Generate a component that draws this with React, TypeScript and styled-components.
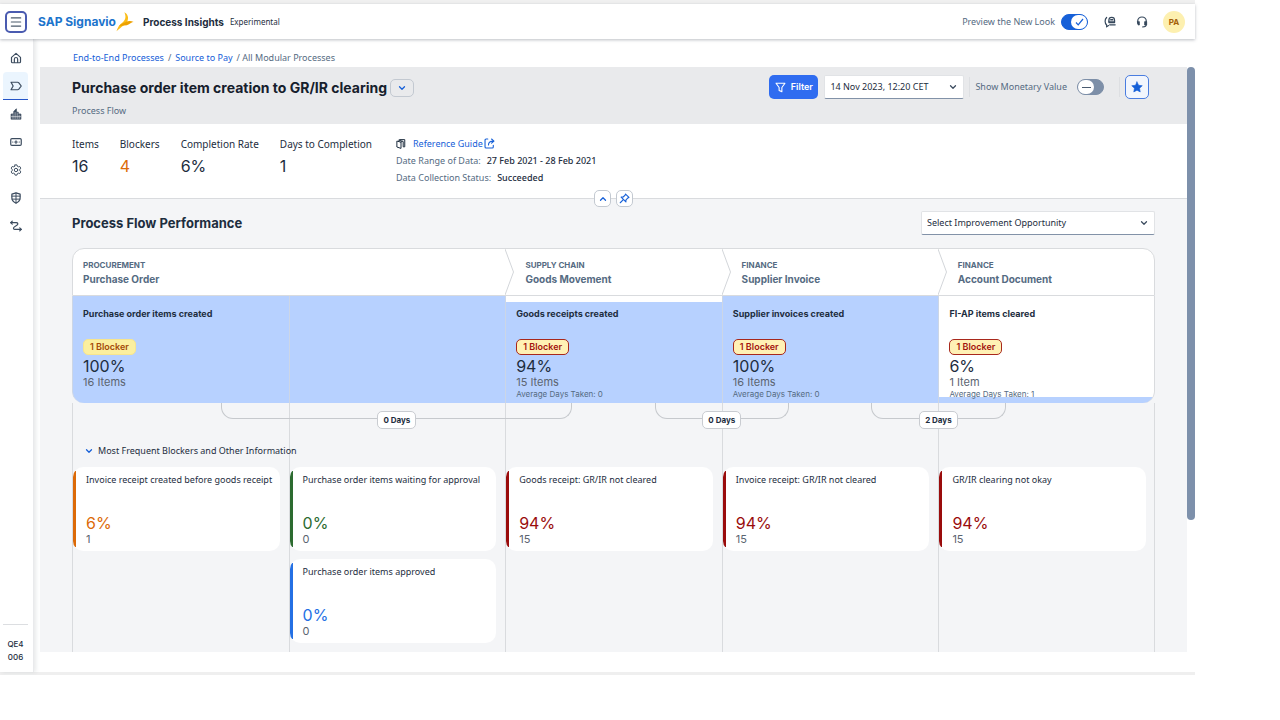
import React from 'react';
import styled, { createGlobalStyle, css } from 'styled-components';
import { ChevronDown, ChevronUp, Menu } from 'lucide-react';

const color = {
  ink: '#1d2d3e',
  muted: '#556b82',
  grey: '#5b6470',
  blue: '#1660d8',
  accent: '#2f6cf0',
  fill: '#b7d1ff',
  line: '#d9dbde',
  surface: '#f4f5f7',
  orange: '#dc6a08',
  green: '#2c6b30',
  red: '#9a0c0c',
};

const GlobalStyle = createGlobalStyle`
  *, *::before, *::after { box-sizing: border-box; }
  body {
    margin: 0;
    background: #fff;
    color: ${color.ink};
    font: 400 9px/12px "Noto Sans", sans-serif;
  }
  button, select, input { font: inherit; color: inherit; margin: 0; }
  button { padding: 0; cursor: pointer; }
  a { color: ${color.blue}; text-decoration: none; }
  h1, h2, h3, p, dl, dd, ul, ol { margin: 0; padding: 0; list-style: none; }
  svg { display: block; flex: none; }
`;

const bold = css`
  font-family: Inter, sans-serif;
  font-weight: 700;
`;

const Page = styled.div`
  padding-right: 85px;
`;

const Frame = styled.div`
  border-top: 4px solid #f0f0f0;
  border-bottom: 3px solid #efefef;
`;

/* ---------- shell bar ---------- */

const ShellBar = styled.header`
  position: relative;
  display: flex;
  align-items: center;
  height: 35px;
  padding: 0 10px 0 5px;
  background: #fff;
  box-shadow: 0 1px 3px rgba(60, 70, 85, 0.35);
  z-index: 2;
`;

const MenuButton = styled.button`
  display: grid;
  place-items: center;
  width: 22px;
  height: 22px;
  border: 2px solid #4a5bb0;
  border-radius: 5px;
  background: #fff;
  color: #4b5a6b;
`;

const Brand = styled.a`
  ${bold}
  display: flex;
  align-items: center;
  margin-left: 11px;
  font-size: 12px;
  color: #1c74cc;
`;

const Product = styled.span`
  ${bold}
  margin-left: 9px;
  font-size: 10px;
`;

const Tag = styled.span`
  margin-left: 6px;
  font-size: 8px;
`;

const ShellActions = styled.div`
  display: flex;
  align-items: center;
  margin-left: auto;
`;

const ToggleLabel = styled.label<{ $gap: number }>`
  display: flex;
  align-items: center;
  gap: ${(p) => p.$gap}px;
  color: ${color.muted};
`;

const Toggle = styled.input.attrs({ type: 'checkbox', role: 'switch' })`
  appearance: none;
  display: flex;
  width: 27px;
  height: 16px;
  border: 1px solid #7d8fa8;
  border-radius: 8px;
  background: #7d8fa8;
  cursor: pointer;

  &::before {
    content: '';
    width: 16px;
    height: 14px;
    border-radius: 8px;
    background: #fff linear-gradient(#4a5b70, #4a5b70) center / 9px 1px no-repeat;
  }

  &:checked {
    justify-content: flex-end;
    border-color: ${color.blue};
    background: ${color.blue};
  }

  &:checked::before {
    background: #fff;
  }
`;

const ToggleBox = styled.span`
  display: grid;

  > * {
    grid-area: 1 / 1;
  }

  > svg {
    justify-self: end;
    align-self: center;
    margin-right: 4px;
    pointer-events: none;
  }
`;

const IconButton = styled.button`
  display: grid;
  place-items: center;
  width: 20px;
  height: 20px;
  margin-left: 12px;
  border: 0;
  background: none;
  color: #36485c;
`;

const Avatar = styled.button`
  ${bold}
  width: 22px;
  height: 22px;
  margin-left: 11px;
  border: 0;
  border-radius: 50%;
  background: #fdf0b0;
  color: #a3600a;
  font-size: 8px;
`;

/* ---------- side navigation ---------- */

const Body = styled.div`
  display: grid;
  grid-template-columns: 34px minmax(0, 1fr) 8px;
`;

const SideNav = styled.nav`
  display: flex;
  flex-direction: column;
  justify-content: space-between;
  padding: 5px 5px 8px 3px;
  border-right: 1px solid #e9eaec;
  box-shadow: 2px 0 4px rgba(60, 70, 85, 0.12);
`;

const NavLink = styled.a<{ $active?: boolean }>`
  display: grid;
  place-items: center;
  height: 28px;
  border-radius: 4px 4px 0 0;
  color: #3c4c5f;
  ${(p) =>
    p.$active &&
    css`
      background: #ebf5fe linear-gradient(#2455c8, #2455c8) bottom / 100% 1px no-repeat;
    `}
`;

const Tenant = styled.p`
  padding-top: 13px;
  border-top: 1px solid #dcdee1;
  color: ${color.ink};
  font: 500 8px/13px Inter, sans-serif;
  text-align: center;
`;

/* ---------- page header ---------- */

const Main = styled.main`
  margin-left: 6px;
  padding-bottom: 20px;
`;

const Breadcrumb = styled.nav`
  display: flex;
  gap: 4px;
  padding: 13px 33px 3px;
  color: ${color.muted};
`;

const TitleBar = styled.div`
  display: flex;
  justify-content: space-between;
  align-items: flex-start;
  padding: 8px 38px 7px 32px;
  background: #e9eaec;
`;

const TitleRow = styled.div`
  display: flex;
  align-items: center;
  gap: 3px;
  height: 26px;
`;

const Title = styled.h1`
  ${bold}
  font-size: 14px;
  line-height: 18px;
  color: #16202c;
`;

const VariantButton = styled.button`
  display: grid;
  place-items: center;
  width: 24px;
  height: 18px;
  border: 1px solid #c3c9d1;
  border-radius: 5px;
  background: none;
  color: ${color.blue};
`;

const Subtitle = styled.p`
  margin-top: 4px;
  color: ${color.muted};
`;

const Toolbar = styled.div`
  display: flex;
  align-items: center;
  height: 24px;
`;

const FilterButton = styled.button`
  display: flex;
  align-items: center;
  justify-content: center;
  gap: 5px;
  width: 49px;
  height: 24px;
  margin-right: 6px;
  border: 0;
  border-radius: 5px;
  background: ${color.accent};
  color: #fff;
  font-family: Inter, sans-serif;
  font-weight: 600;
`;

const SelectBox = styled.div<{ $width: number }>`
  display: grid;
  width: ${(p) => p.$width}px;

  > * {
    grid-area: 1 / 1;
  }

  > svg {
    justify-self: end;
    align-self: center;
    margin-right: 6px;
    pointer-events: none;
    color: #3c4c5f;
  }
`;

const Select = styled.select`
  appearance: none;
  width: 100%;
  height: 24px;
  padding: 0 20px 0 5px;
  border: 1px solid #e1e3e6;
  border-bottom-color: #8292a8;
  border-radius: 2px;
  background: #fff;
  color: ${color.ink};
`;

const Divider = styled.span<{ $before?: number }>`
  width: 1px;
  height: 20px;
  margin: 0 5px 0 ${(p) => p.$before ?? 5}px;
  background: #dddfe2;
`;

const StarButton = styled.button`
  display: grid;
  place-items: center;
  width: 24px;
  height: 24px;
  border: 1px solid #4a7de0;
  border-radius: 5px;
  background: #f2f6fd;
  color: ${color.blue};
`;

const Summary = styled.section`
  position: relative;
  display: flex;
  align-items: flex-start;
  gap: 24px;
  height: 75px;
  padding: 13px 32px 0;
  border-bottom: 1px solid ${color.line};
`;

const Stats = styled.dl`
  display: flex;
  gap: 21px;
`;

const StatLabel = styled.dt`
  font-size: 10px;
  line-height: 14px;
`;

const StatValue = styled.dd<{ $color?: string }>`
  margin-top: 4px;
  font-family: Inter, sans-serif;
  font-size: 16px;
  line-height: 22px;
  color: ${(p) => p.$color ?? color.ink};
`;

const Details = styled.div`
  margin-top: -2px;
  line-height: 17px;
`;

const Guide = styled.p`
  display: flex;
  align-items: center;
  gap: 7px;
`;

const GuideLink = styled.a`
  display: flex;
  align-items: center;
  gap: 1px;
`;

const Fact = styled.p`
  display: flex;
  gap: 6px;
  color: ${color.muted};

  b {
    font-weight: 500;
    color: ${color.ink};
  }
`;

const HeaderHandles = styled.div`
  position: absolute;
  left: 0;
  right: 0;
  bottom: -9px;
  display: flex;
  justify-content: center;
  gap: 5px;
`;

const Handle = styled.button`
  display: grid;
  place-items: center;
  width: 17px;
  height: 17px;
  border: 1px solid #c3c9d1;
  border-radius: 5px;
  background: #fff;
  color: ${color.blue};
`;

/* ---------- process flow ---------- */

const Performance = styled.section`
  padding: 12px 32px 0;
  background: ${color.surface};
`;

const SectionHead = styled.div`
  display: flex;
  justify-content: space-between;
  align-items: center;
  margin-bottom: 13px;
`;

const SectionTitle = styled.h2`
  ${bold}
  font-size: 13px;
  line-height: 18px;
`;

const columns = css`
  display: grid;
  grid-template-columns: repeat(5, minmax(0, 1fr));
`;

const Phases = styled.div`
  ${columns}
  border: 1px solid ${color.line};
  border-radius: 12px 12px 0 0;
  background: #fff;
`;

const Phase = styled.div<{ $first?: boolean }>`
  display: flex;
  grid-column: span ${(p) => (p.$first ? 2 : 1)};
  height: 46px;
  padding-left: ${(p) => (p.$first ? 10 : 0)}px;
`;

const PhaseText = styled.div`
  padding: 9px 0 0;
`;

const PhaseArea = styled.p`
  font: 700 8px/14px Inter, sans-serif;
  color: ${color.muted};
`;

const PhaseName = styled.h3`
  font: 700 10px/15px Inter, sans-serif;
  color: ${color.muted};
`;

const Steps = styled.div`
  ${columns}
`;

const Step = styled.div<{ $share: number }>`
  height: 107px;
  padding: 12px 0 0 10px;
  border-left: 1px solid #ccd6e6;
  background: linear-gradient(to top, ${color.fill} ${(p) => p.$share}%, #fff ${(p) => p.$share}%);

  &:first-child {
    border-radius: 0 0 0 12px;
  }

  &:last-child {
    border-right: 1px solid ${color.line};
    border-radius: 0 0 12px 0;
  }
`;

const StepName = styled.h3`
  ${bold}
  font-size: 9px;
  line-height: 12px;
`;

const Badge = styled.span<{ $critical: boolean }>`
  display: inline-block;
  margin: 19px 0 2px;
  padding: 0 6px;
  border: 1px solid ${(p) => (p.$critical ? '#a8281c' : '#f7e58e')};
  border-radius: 5px;
  background: ${(p) => (p.$critical ? '#fff1b5' : '#fbef9f')};
  color: ${(p) => (p.$critical ? '#a3140f' : '#a44a08')};
  font: 600 9px/14px Inter, sans-serif;
  vertical-align: top;
`;

const Percent = styled.p<{ $color?: string }>`
  font-family: Inter, sans-serif;
  font-size: 16px;
  line-height: 18px;
  color: ${(p) => p.$color ?? color.ink};
`;

const Count = styled.p`
  font-family: Inter, sans-serif;
  font-size: 11px;
  line-height: 14px;
  color: ${color.grey};
`;

const Average = styled.p`
  font-family: Inter, sans-serif;
  font-size: 8px;
  line-height: 11px;
  color: ${color.muted};
`;

const Lower = styled.div`
  display: grid;

  > * {
    grid-area: 1 / 1;
  }
`;

const Lanes = styled.div`
  ${columns}
`;

const Lane = styled.div`
  border-left: 1px solid ${color.line};

  &:last-child {
    border-right: 1px solid ${color.line};
  }
`;

const Connectors = styled.div`
  ${columns}
`;

const Connector = styled.div<{ $from: number; $to: number; $width: number }>`
  display: flex;
  justify-content: center;
  align-items: flex-end;
  grid-column: ${(p) => p.$from} / ${(p) => p.$to};
  grid-row: 1;
  justify-self: center;
  width: ${(p) => p.$width}%;
  height: 16px;
  border: 1px solid #c6c9cd;
  border-top: 0;
  border-radius: 0 0 12px 12px;
`;

const Days = styled.span`
  margin-bottom: -11px;
  padding: 0 5px;
  border: 1px solid #c9ccd1;
  border-radius: 5px;
  background: #fff;
  font: 700 8px/16px Inter, sans-serif;
`;

const Collapse = styled.button`
  display: flex;
  align-items: center;
  gap: 4px;
  margin: 26px 0 10px 12px;
  border: 0;
  background: none;

  svg {
    color: ${color.blue};
  }
`;

const Cards = styled.div`
  ${columns}
  align-items: start;
  padding-bottom: 9px;
`;

const CardStack = styled.ul`
  display: grid;
  gap: 8px;
  padding-right: 9px;
  padding-left: 1px;
`;

const Card = styled.li<{ $color: string }>`
  height: 84px;
  padding: 7px 4px 0 13px;
  border-radius: 10px;
  background: #fff linear-gradient(${(p) => p.$color}, ${(p) => p.$color}) left center / 3px 76px no-repeat;
  white-space: nowrap;
`;

const CardFigures = styled.div`
  margin-top: 28px;
`;

const ScrollTrack = styled.div`
  padding-top: 28px;
`;

const ScrollThumb = styled.div`
  width: 8px;
  height: 453px;
  border-radius: 4px;
  background: #7d90ab;
`;

/* ---------- icons ---------- */

type IconProps = { children: React.ReactNode; size?: number };

const Glyph = ({ children, size = 12 }: IconProps) => (
  <svg
    width={size}
    height={size}
    viewBox="0 0 16 16"
    fill="none"
    stroke="currentColor"
    strokeWidth="1.6"
    strokeLinecap="round"
    strokeLinejoin="round"
    aria-hidden="true"
  >
    {children}
  </svg>
);

const HomeIcon = () => (
  <Glyph>
    <path d="M2 7.2 8 1.8l6 5.4V13a1.3 1.3 0 0 1-1.3 1.3H3.3A1.3 1.3 0 0 1 2 13Z" />
    <path d="M5.8 14V9.5a2.2 2.2 0 0 1 4.4 0V14" />
  </Glyph>
);

const ProcessIcon = () => (
  <Glyph>
    <path d="M1.4 3h8.8c.7 0 1.2.3 1.6.8L15 8l-3.2 4.2c-.4.5-.9.8-1.6.8H1.4L4.2 8Z" />
  </Glyph>
);

const BuildingIcon = () => (
  <Glyph>
    <path d="M1.500 14.500V8H5V4.500L8.500 1v4.500H11V8h3.500v6.500Z" fill="currentColor" strokeWidth="1" />
    <path d="M4 9v5M6.800 6v8M9.600 7v7M12.200 9.500V14M2 11.500h12" stroke="#fff" strokeWidth=".7" />
  </Glyph>
);

const MoneyIcon = () => (
  <Glyph>
    <rect x="1" y="3.5" width="14" height="9" rx="1.5" />
    <path d="M6.300 8h3.400M8 6.300v3.400M3.600 8h.2M12.200 8h.2" />
  </Glyph>
);

const GearIcon = () => (
  <Glyph>
    <path
      d="M6.700 1.200h2.600l.5 1.900 1.300.7 1.900-.5 1.400 2.200-1.300 1.500v2l1.300 1.500-1.400 2.200-1.900-.5-1.300.7-.5 1.900H6.700l-.5-1.900-1.300-.7-1.900.5-1.400-2.200L2.900 9V7L1.600 5.500 3 3.300l1.900.5 1.300-.7Z"
      strokeWidth="1.3"
    />
    <circle cx="8" cy="8" r="2.3" strokeWidth="1.3" />
  </Glyph>
);

const ShieldIcon = () => (
  <Glyph>
    <path d="M8 1.200 13.500 2.800V8c0 3.200-2.200 5.400-5.500 6.800C4.700 13.400 2.500 11.200 2.500 8V2.800Z" />
    <path d="M8 1.500v13M2.600 5.500h10.800M3 9.500h10" strokeWidth="1.3" />
  </Glyph>
);

const RouteIcon = () => (
  <Glyph>
    <path d="M1 3.500h7.500c2 0 2.600 2 1 3.200L5.500 9.500c-1.600 1.200-.9 3 1 3H15" />
    <path d="M3 1.500 1 3.500l2 2M13 10.500l2 2-2 2" />
  </Glyph>
);

const ChatIcon = () => (
  <Glyph>
    <path d="M3.500 2C.8 4.500.8 9.500 3.500 12v2.500L6 12.800" />
    <path d="M6.500 5.500a3.800 3.800 0 0 1 7.600 0v3.300H6.500Z" />
    <path d="M8.800 4.800h3M6.500 7h7.600M7.500 11.800H15" strokeWidth="1.4" />
  </Glyph>
);

const HeadsetIcon = () => (
  <Glyph>
    <path d="M2.300 9.500V7a5.700 5.700 0 0 1 11.400 0v4c0 2.200-1.500 3.500-4.700 3.500" />
    <path d="M2.300 7.500h2.200V12h-.7c-1 0-1.500-.5-1.500-1.500ZM13.700 7.500h-2.200V12h2.200Z" fill="currentColor" strokeWidth="1" />
  </Glyph>
);

const FunnelIcon = () => (
  <Glyph size={11}>
    <path d="M1.500 1.800h13L10 8v6l-4-1.800V8Z" />
  </Glyph>
);

const StarIcon = () => (
  <Glyph>
    <path
      d="m8 1.200 2.100 4.500 4.900.6-3.600 3.400.9 4.900L8 12.200l-4.300 2.400.9-4.900L1 6.300l4.900-.6Z"
      fill="currentColor"
      strokeWidth=".8"
    />
  </Glyph>
);

const GuideIcon = () => (
  <Glyph size={10}>
    <path d="M2 3.500 8 5v10l-6-2ZM8 5l1.500-1M4.500 1.800 5.500 1H14v11.500h-2.500V4L5 2" />
  </Glyph>
);

const ExternalIcon = () => (
  <Glyph size={11}>
    <path d="M5.500 1.500H3A1.500 1.500 0 0 0 1.500 3v10A1.500 1.500 0 0 0 3 14.500h9a1.500 1.500 0 0 0 1.500-1.500v-2.500" />
    <path d="M6.500 10c0-3.500 2-5.500 7-5.500M11 1.500l3.500 3-3.500 3" />
  </Glyph>
);

const PinIcon = () => (
  <Glyph size={11}>
    <path d="m9.500 1.500 5 5-1.500.6-2.800 2.800-.2 3L3.100 6l3-.2L8.900 3ZM6.300 9.700l-4.500 4.500" />
  </Glyph>
);

const CheckIcon = () => (
  <svg width="9" height="8" viewBox="0 0 9 8" fill="none" stroke="#1660d8" strokeWidth="1.2" aria-hidden="true">
    <path d="m1 4.500 2.200 2.300L8 1" />
  </svg>
);

const Logo = () => (
  <svg width="18" height="20" viewBox="1 0 18 20" aria-hidden="true">
    <path d="M9.300.3c3.400 1.700 4.600 5.200 3.200 8.600C11.200 12.200 7 13.900 1.500 19.200c1-3.800 2.900-6.500 6-8.800C10.700 8 11.300 4.600 9.300.3Z" fill="#fbbd17" />
    <path d="M4 13.800c2.300-2.300 4.600-2.600 7-3.900 2-1.100 5-1.200 7.700 0-2.400.3-3.200 1.300-4.700 2.300-2.700 1.700-6.600 1.300-10 1.600Z" fill="#eda100" />
  </svg>
);

const PhaseArrow = () => (
  <svg width="20" height="46" viewBox="0 0 20 46" fill="none" stroke="#d3d6da" aria-hidden="true">
    <path d="M0 0 8.500 23 0 46" />
  </svg>
);

/* ---------- data ---------- */

const navItems = [
  { label: 'Home', icon: HomeIcon },
  { label: 'Processes', icon: ProcessIcon, active: true },
  { label: 'Organization', icon: BuildingIcon },
  { label: 'Value', icon: MoneyIcon },
  { label: 'Settings', icon: GearIcon },
  { label: 'Security', icon: ShieldIcon },
  { label: 'Flows', icon: RouteIcon },
];

const stats = [
  { label: 'Items', value: '16' },
  { label: 'Blockers', value: '4', color: color.orange },
  { label: 'Completion Rate', value: '6%' },
  { label: 'Days to Completion', value: '1' },
];

const phases = [
  { area: 'PROCUREMENT', name: 'Purchase Order' },
  { area: 'SUPPLY CHAIN', name: 'Goods Movement' },
  { area: 'FINANCE', name: 'Supplier Invoice' },
  { area: 'FINANCE', name: 'Account Document' },
];

type StepData = { name: string; share: number; items: string; average?: string; critical: boolean } | null;

const steps: StepData[] = [
  { name: 'Purchase order items created', share: 100, items: '16 Items', critical: false },
  null,
  { name: 'Goods receipts created', share: 94, items: '15 Items', average: '0', critical: true },
  { name: 'Supplier invoices created', share: 100, items: '16 Items', average: '0', critical: true },
  { name: 'FI-AP items cleared', share: 6, items: '1 Item', average: '1', critical: true },
];

const connectors = [
  { from: 1, to: 4, width: 54, text: '0 Days' },
  { from: 3, to: 5, width: 31, text: '0 Days' },
  { from: 4, to: 6, width: 31, text: '2 Days' },
];

const cardColumns = [
  [{ title: 'Invoice receipt created before goods receipt', share: '6%', count: '1', color: color.orange }],
  [
    { title: 'Purchase order items waiting for approval', share: '0%', count: '0', color: color.green },
    { title: 'Purchase order items approved', share: '0%', count: '0', color: '#2470e4' },
  ],
  [{ title: 'Goods receipt: GR/IR not cleared', share: '94%', count: '15', color: color.red }],
  [{ title: 'Invoice receipt: GR/IR not cleared', share: '94%', count: '15', color: color.red }],
  [{ title: 'GR/IR clearing not okay', share: '94%', count: '15', color: color.red }],
];

/* ---------- page ---------- */

export default function App() {
  return (
    <Page>
      <GlobalStyle />
      <Frame>
        <ShellBar>
          <MenuButton aria-label="Menu">
            <Menu size={14} strokeWidth={2} />
          </MenuButton>
          <Brand href="#">
            SAP Signavio
            <Logo />
          </Brand>
          <Product>Process Insights</Product>
          <Tag>Experimental</Tag>
          <ShellActions>
            <ToggleLabel $gap={6}>
              Preview the New Look
              <ToggleBox>
                <Toggle defaultChecked />
                <CheckIcon />
              </ToggleBox>
            </ToggleLabel>
            <IconButton aria-label="Feedback">
              <ChatIcon />
            </IconButton>
            <IconButton aria-label="Support">
              <HeadsetIcon />
            </IconButton>
            <Avatar>PA</Avatar>
          </ShellActions>
        </ShellBar>

        <Body>
          <SideNav aria-label="Main">
            <div>
              {navItems.map(({ label, icon: Icon, active }) => (
                <NavLink key={label} href="#" aria-label={label} $active={active}>
                  <Icon />
                </NavLink>
              ))}
            </div>
            <Tenant>
              QE4
              <br />
              006
            </Tenant>
          </SideNav>

          <Main>
            <Breadcrumb aria-label="Breadcrumb">
              <a href="#">End-to-End Processes</a>
              <span>/</span>
              <a href="#">Source to Pay</a>
              <span>/ All Modular Processes</span>
            </Breadcrumb>

            <TitleBar>
              <div>
                <TitleRow>
                  <Title>Purchase order item creation to GR/IR clearing</Title>
                  <VariantButton aria-label="Switch process">
                    <ChevronDown size={10} strokeWidth={3} />
                  </VariantButton>
                </TitleRow>
                <Subtitle>Process Flow</Subtitle>
              </div>
              <Toolbar>
                <FilterButton>
                  <FunnelIcon />
                  Filter
                </FilterButton>
                <SelectBox $width={140}>
                  <Select aria-label="Data snapshot">
                    <option>14 Nov 2023, 12:20 CET</option>
                  </Select>
                  <ChevronDown size={10} strokeWidth={3} />
                </SelectBox>
                <Divider />
                <ToggleLabel $gap={10}>
                  Show Monetary Value
                  <Toggle />
                </ToggleLabel>
                <Divider $before={15} />
                <StarButton aria-label="Favorite">
                  <StarIcon />
                </StarButton>
              </Toolbar>
            </TitleBar>

            <Summary>
              <Stats>
                {stats.map((s) => (
                  <div key={s.label}>
                    <StatLabel>{s.label}</StatLabel>
                    <StatValue $color={s.color}>{s.value}</StatValue>
                  </div>
                ))}
              </Stats>
              <Details>
                <Guide>
                  <GuideIcon />
                  <GuideLink href="#">
                    Reference Guide
                    <ExternalIcon />
                  </GuideLink>
                </Guide>
                <Fact>
                  Date Range of Data: <b>27 Feb 2021 - 28 Feb 2021</b>
                </Fact>
                <Fact>
                  Data Collection Status: <b>Succeeded</b>
                </Fact>
              </Details>
              <HeaderHandles>
                <Handle aria-label="Collapse header">
                  <ChevronUp size={10} strokeWidth={3} />
                </Handle>
                <Handle aria-label="Pin header">
                  <PinIcon />
                </Handle>
              </HeaderHandles>
            </Summary>

            <Performance>
              <SectionHead>
                <SectionTitle>Process Flow Performance</SectionTitle>
                <SelectBox $width={234}>
                  <Select aria-label="Improvement opportunity">
                    <option>Select Improvement Opportunity</option>
                  </Select>
                  <ChevronDown size={10} strokeWidth={3} />
                </SelectBox>
              </SectionHead>

              <Phases>
                {phases.map((p, i) => (
                  <Phase key={p.name} $first={i === 0}>
                    {i > 0 && <PhaseArrow />}
                    <PhaseText>
                      <PhaseArea>{p.area}</PhaseArea>
                      <PhaseName>{p.name}</PhaseName>
                    </PhaseText>
                  </Phase>
                ))}
              </Phases>

              <Steps>
                {steps.map((s, i) => (
                  <Step key={i} $share={s ? s.share : 100}>
                    {s && (
                      <>
                        <StepName>{s.name}</StepName>
                        <Badge $critical={s.critical}>1 Blocker</Badge>
                        <Percent>{s.share}%</Percent>
                        <Count>{s.items}</Count>
                        {s.average && <Average>Average Days Taken: {s.average}</Average>}
                      </>
                    )}
                  </Step>
                ))}
              </Steps>

              <Lower>
                <Lanes aria-hidden="true">
                  {cardColumns.map((_, i) => (
                    <Lane key={i} />
                  ))}
                </Lanes>
                <div>
                  <Connectors>
                    {connectors.map((c) => (
                      <Connector key={c.from} $from={c.from} $to={c.to} $width={c.width}>
                        <Days>{c.text}</Days>
                      </Connector>
                    ))}
                  </Connectors>
                  <Collapse aria-expanded="true">
                    <ChevronDown size={10} strokeWidth={3} />
                    Most Frequent Blockers and Other Information
                  </Collapse>
                  <Cards>
                    {cardColumns.map((cards, i) => (
                      <CardStack key={i}>
                        {cards.map((c) => (
                          <Card key={c.title} $color={c.color}>
                            {c.title}
                            <CardFigures>
                              <Percent $color={c.color}>{c.share}</Percent>
                              <Count>{c.count}</Count>
                            </CardFigures>
                          </Card>
                        ))}
                      </CardStack>
                    ))}
                  </Cards>
                </div>
              </Lower>
            </Performance>
          </Main>

          <ScrollTrack>
            <ScrollThumb />
          </ScrollTrack>
        </Body>
      </Frame>
    </Page>
  );
}
